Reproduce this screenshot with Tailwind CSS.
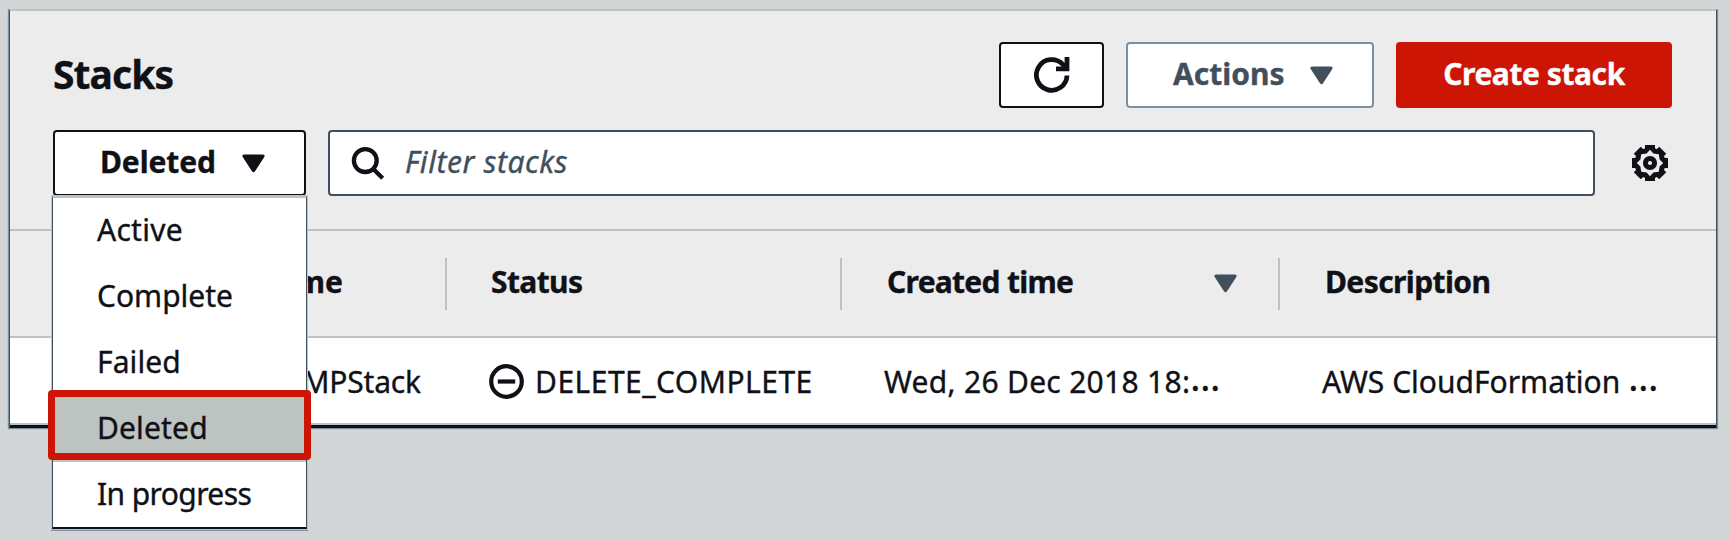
<!DOCTYPE html>
<html lang="en">
<head>
<meta charset="utf-8">
<title>Stacks</title>
<script src="https://cdn.jsdelivr.net/npm/@tailwindcss/browser@4"></script>
</head>
<body class="h-[540px] overflow-hidden bg-[#d2d6d6] pt-[9px] pl-[8px] font-['Noto_Sans',sans-serif] text-[30px] leading-[40px] whitespace-nowrap text-[#0f1116] [-webkit-text-stroke:0.35px]">
<main class="w-[1710px] border-x border-[#7b91a1] shadow-[0_1px_1px_#7b91a1]">
  <div class="border-x border-t-2 border-x-[#414f5c] border-t-[#bdc3c2] bg-[#ececec]">
    <header class="flex h-[220px] flex-col gap-[22px] border-b-2 border-[#bdc3c2] pt-[31px] pr-[44px] pl-[43px]">
      <div class="flex h-[66px] items-center gap-[22px]">
        <h1 class="mr-auto pb-[3px] text-[39px] font-bold tracking-[-0.9px]">Stacks</h1>
        <button class="flex h-[66px] w-[105px] items-center justify-center rounded-[4px] border-2 border-[#0f1116] bg-white" aria-label="Refresh">
          <svg class="h-[36px] w-[36px]" viewBox="0 0 36 36" fill="none" stroke="#0f1116" stroke-width="4.8">
            <path d="M33 18.5A15.3 15.3 0 1 1 28.8 7.4L32.6 11.5"/>
            <path d="M33 0V11.8H22" />
          </svg>
        </button>
        <button class="flex h-[66px] w-[248px] items-center justify-between rounded-[4px] border-2 border-[#7b91a1] bg-white pr-[39px] pl-[45px] font-bold text-[#414f5c]">
          <span class="pb-[2px]">Actions</span>
          <svg class="h-[19px] w-[23px]" viewBox="0 0 23 19" fill="#414f5c"><path d="M2 .5H21Q23.4 .8 22.3 3L13.2 17Q11.5 19.4 9.8 17L.7 3Q-.4 .8 2 .5Z"/></svg>
        </button>
        <button class="flex h-[66px] w-[276px] items-center justify-center rounded-[4px] bg-[#cc1505] pb-[2px] font-bold tracking-[-0.43px] text-white">Create stack</button>
      </div>
      <div class="flex h-[66px] items-center">
        <div class="relative h-[66px] w-[253px]">
          <button class="flex h-full w-full items-center justify-between rounded-[4px] border-2 border-[#0f1116] bg-white pr-[39px] pl-[45px] font-bold">
            <span class="pb-[2px] tracking-[-0.1px]">Deleted</span>
            <svg class="h-[19px] w-[23px]" viewBox="0 0 23 19" fill="#0f1116"><path d="M2 .5H21Q23.4 .8 22.3 3L13.2 17Q11.5 19.4 9.8 17L.7 3Q-.4 .8 2 .5Z"/></svg>
          </button>
          <ul class="absolute top-[66px] left-[-1px] z-10 w-[255px] border-x border-t-2 border-b-2 border-x-[#414f5c] border-t-[#bdc3c2] border-b-[#0f1116] bg-white shadow-[0_0_0_1px_#bdc3c2,0_1px_0_1px_#7b91a1]">
            <li class="h-[65px] pt-[12px] pl-[44px] tracking-[0.25px]">Active</li>
            <li class="h-[66px] pt-[13px] pl-[44px]">Complete</li>
            <li class="h-[66px] pt-[13px] pl-[44px] tracking-[0.1px]">Failed</li>
            <li class="relative h-[67px] border-b-2 border-[#bdc3c2] bg-[#bdc3c1] pt-[13px] pl-[44px] tracking-[0.15px]">Deleted<span class="absolute -top-[5px] -right-[5px] -left-[5px] h-[70px] rounded-[4px] border-[7px] border-[#cc1505]"></span></li>
            <li class="h-[65px] pt-[12px] pl-[44px] tracking-[-0.6px]">In progress</li>
          </ul>
        </div>
        <div class="ml-[22px] flex h-[66px] w-[1267px] items-center rounded-[4px] border-2 border-[#414f5c] bg-white pl-[21px]">
          <svg class="h-[34px] w-[34px]" viewBox="0 0 34 34" fill="none" stroke="#0f1116" stroke-width="4.3"><circle cx="14.3" cy="14.6" r="11.4"/><path d="M22 22.7L31.7 32.2"/></svg>
          <span class="pb-[2px] pl-[20px] tracking-[0.56px] text-[#414f5c] italic">Filter stacks</span>
        </div>
        <svg class="ml-[37px] h-[36px] w-[36px] shrink-0" viewBox="-18 -18 36 36" aria-label="Preferences">
          <g fill="#0f1116">
            <circle r="15.6"/>
            <path d="M-5-18H5V18H-5Z"/>
            <path d="M-18-5H18V5H-18Z"/>
            <path d="M-5-18H5V18H-5Z" transform="rotate(45)"/>
            <path d="M-5-18H5V18H-5Z" transform="rotate(-45)"/>
          </g>
          <path fill="#ececec" d="M0-13.2L3.4-9.6L8.8-8.8L9.6-3.4L13.2 0L9.6 3.4L8.8 8.8L3.4 9.6L0 13.2L-3.4 9.6L-8.8 8.8L-9.6 3.4L-13.2 0L-9.6-3.4L-8.8-8.8L-3.4-9.6Z"/>
          <circle r="4.6" fill="none" stroke="#0f1116" stroke-width="5"/>
        </svg>
      </div>
    </header>
    <div class="grid h-[107px] grid-cols-[437px_395px_438px_1fr] items-center border-b-2 border-[#bdc3c2] font-bold">
      <div class="flex h-[52px] items-center justify-end border-r-2 border-[#bdc3c2] pr-[102px] pb-[3px]">me</div>
      <div class="flex h-[52px] items-center border-r-2 border-[#bdc3c2] pb-[3px] pl-[44px] tracking-[-0.61px]">Status</div>
      <div class="flex h-[52px] items-center justify-between border-r-2 border-[#bdc3c2] pr-[41px] pl-[45px]">
        <span class="pb-[3px] tracking-[-0.72px]">Created time</span>
        <svg class="h-[19px] w-[23px]" viewBox="0 0 23 19" fill="#414f5c"><path d="M2 .5H21Q23.4 .8 22.3 3L13.2 17Q11.5 19.4 9.8 17L.7 3Q-.4 .8 2 .5Z"/></svg>
      </div>
      <div class="pb-[3px] pl-[45px] tracking-[-0.6px]">Description</div>
    </div>
    <div class="grid h-[90px] grid-cols-[437px_395px_438px_1fr] items-center border-b-[3px] border-[#0f1116] bg-white pt-px shadow-[inset_0_-2px_0_#bdc3c2]">
      <div class="pr-[26px] text-right tracking-[-0.15px]">MPStack</div>
      <div class="flex items-center pl-[42px]">
        <svg class="h-[36px] w-[36px]" viewBox="0 0 36 36" fill="none" stroke="#0f1116" stroke-width="4.2"><circle cx="17.5" cy="17.5" r="15.3"/><path d="M8.8 17.5H26.2"/></svg>
        <span class="pl-[10px] tracking-[0.48px]">DELETE_COMPLETE</span>
      </div>
      <div class="flex pl-[42px] tracking-[0.29px]">Wed, 26 Dec 2018 18:<span class="-mt-[6px] text-[38px] tracking-normal">…</span></div>
      <div class="flex pl-[42px]">AWS CloudFormation<span class="-mt-[6px] pl-[8px] text-[38px]">…</span></div>
    </div>
  </div>
</main>
</body>
</html>
